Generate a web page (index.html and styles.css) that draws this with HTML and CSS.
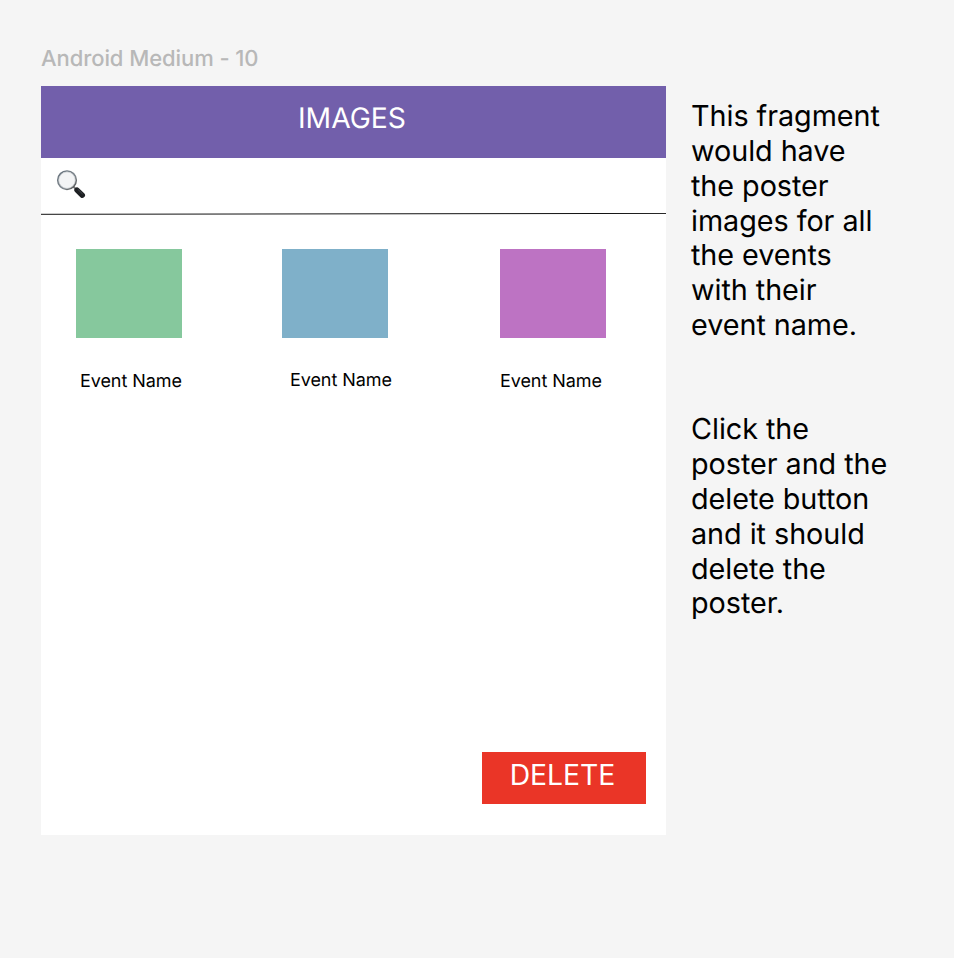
FILE: index.html
```html
<!DOCTYPE html>
<html lang="en">
<head>
<meta charset="utf-8">
<title>Android Medium - 10</title>
<link rel="stylesheet" href="styles.css">
</head>
<body>
<main class="board">
  <section class="frame">
    <h2 class="frame-label">Android Medium - 10</h2>
    <div class="screen">
      <header class="bar">IMAGES</header>
      <div class="search">
        <svg class="lens" viewBox="0 0 30 30" width="30" height="30">
          <defs>
            <linearGradient id="rim" x1="0" y1="0" x2="1" y2="1"><stop offset="0" stop-color="#66717c"/><stop offset=".6" stop-color="#7e868c"/><stop offset="1" stop-color="#4c4c4c"/></linearGradient>
          </defs>
          <path d="M17.5 17.8l3 3" stroke="#777" stroke-width="2"/>
          <path d="M21 21.1l5.3 5.1" stroke="#1d2023" stroke-width="5.4" stroke-linecap="round"/>
          <path d="M21.6 20.1l5 4.9" stroke="#50555a" stroke-width=".8"/>
          <circle cx="11" cy="11.2" r="9.2" fill="#f3f4f5" stroke="url(#rim)" stroke-width="1.7"/>
          <circle cx="11" cy="11.2" r="8.2" fill="none" stroke="#c9cdd0" stroke-width=".7"/>
        </svg>
      </div>
      <svg class="rule" viewBox="0 0 625 2" width="625" height="2"><path d="M0 1.3L625 .4" stroke="#111" stroke-width="1"/></svg>
      <div class="posters">
        <figure class="poster"><div class="art green"></div><figcaption class="name first">Event Name</figcaption></figure>
        <figure class="poster"><div class="art blue"></div><figcaption class="name second">Event Name</figcaption></figure>
        <figure class="poster"><div class="art pink"></div><figcaption class="name">Event Name</figcaption></figure>
      </div>
      <button class="delete">DELETE</button>
    </div>
  </section>
  <aside class="notes">
    <p>This fragment<br>would have<br>the poster<br>images for all<br>the events<br>with their<br>event name.</p>
    <p>Click the<br>poster and the<br>delete button<br>and it should<br>delete the<br>poster.</p>
  </aside>
</main>
</body>
</html>
```

FILE: styles.css
```css
* { box-sizing: border-box; }
body { margin: 0; background: #f5f5f5; font-family: Inter, sans-serif; color: #000; text-rendering: geometricPrecision; }
.board { display: flex; height: 958px; padding: 44px 0 0 41px; gap: 25px; overflow: hidden; }
.frame { width: 625px; }
.frame-label { margin: 0; height: 42px; font-size: 22px; line-height: 30px; font-weight: 500; letter-spacing: -.08px; color: #b8b8b8; white-space: nowrap; }
.screen { display: flex; flex-direction: column; height: 749px; background: #fff; }
.bar { height: 72px; padding-right: 3px; background: #725fab; color: #fff; font-size: 28.3px; font-weight: 400; line-height: 64px; text-align: center; }
.search { height: 55px; padding: 11px 0 0 15px; }
.lens, .rule { display: block; }
.posters { display: grid; grid-template-columns: 206px 218px 106px; padding: 34px 0 0 35px; }
.poster { margin: 0; }
.art { width: 106px; height: 89px; }
.green { background: #86c89d; }
.blue { background: #7fb0c9; }
.pink { background: #bd73c3; }
.name { margin-top: 32px; font-size: 18px; line-height: 24px; letter-spacing: -.08px; white-space: nowrap; }
.first { padding-left: 4px; }
.second { padding-left: 8px; margin-top: 31px; }
.delete { margin: auto 20px 31px auto; width: 164px; height: 52px; padding: 0 3px 5px 0; border: 0; background: #ea3527; color: #fff; font: 400 28.3px/47px Inter, sans-serif; }
.notes { padding-top: 55.3px; font-size: 28.75px; line-height: 34.8px; letter-spacing: -.04px; white-space: nowrap; }
.notes p { margin: 0 0 69.6px; }
```
